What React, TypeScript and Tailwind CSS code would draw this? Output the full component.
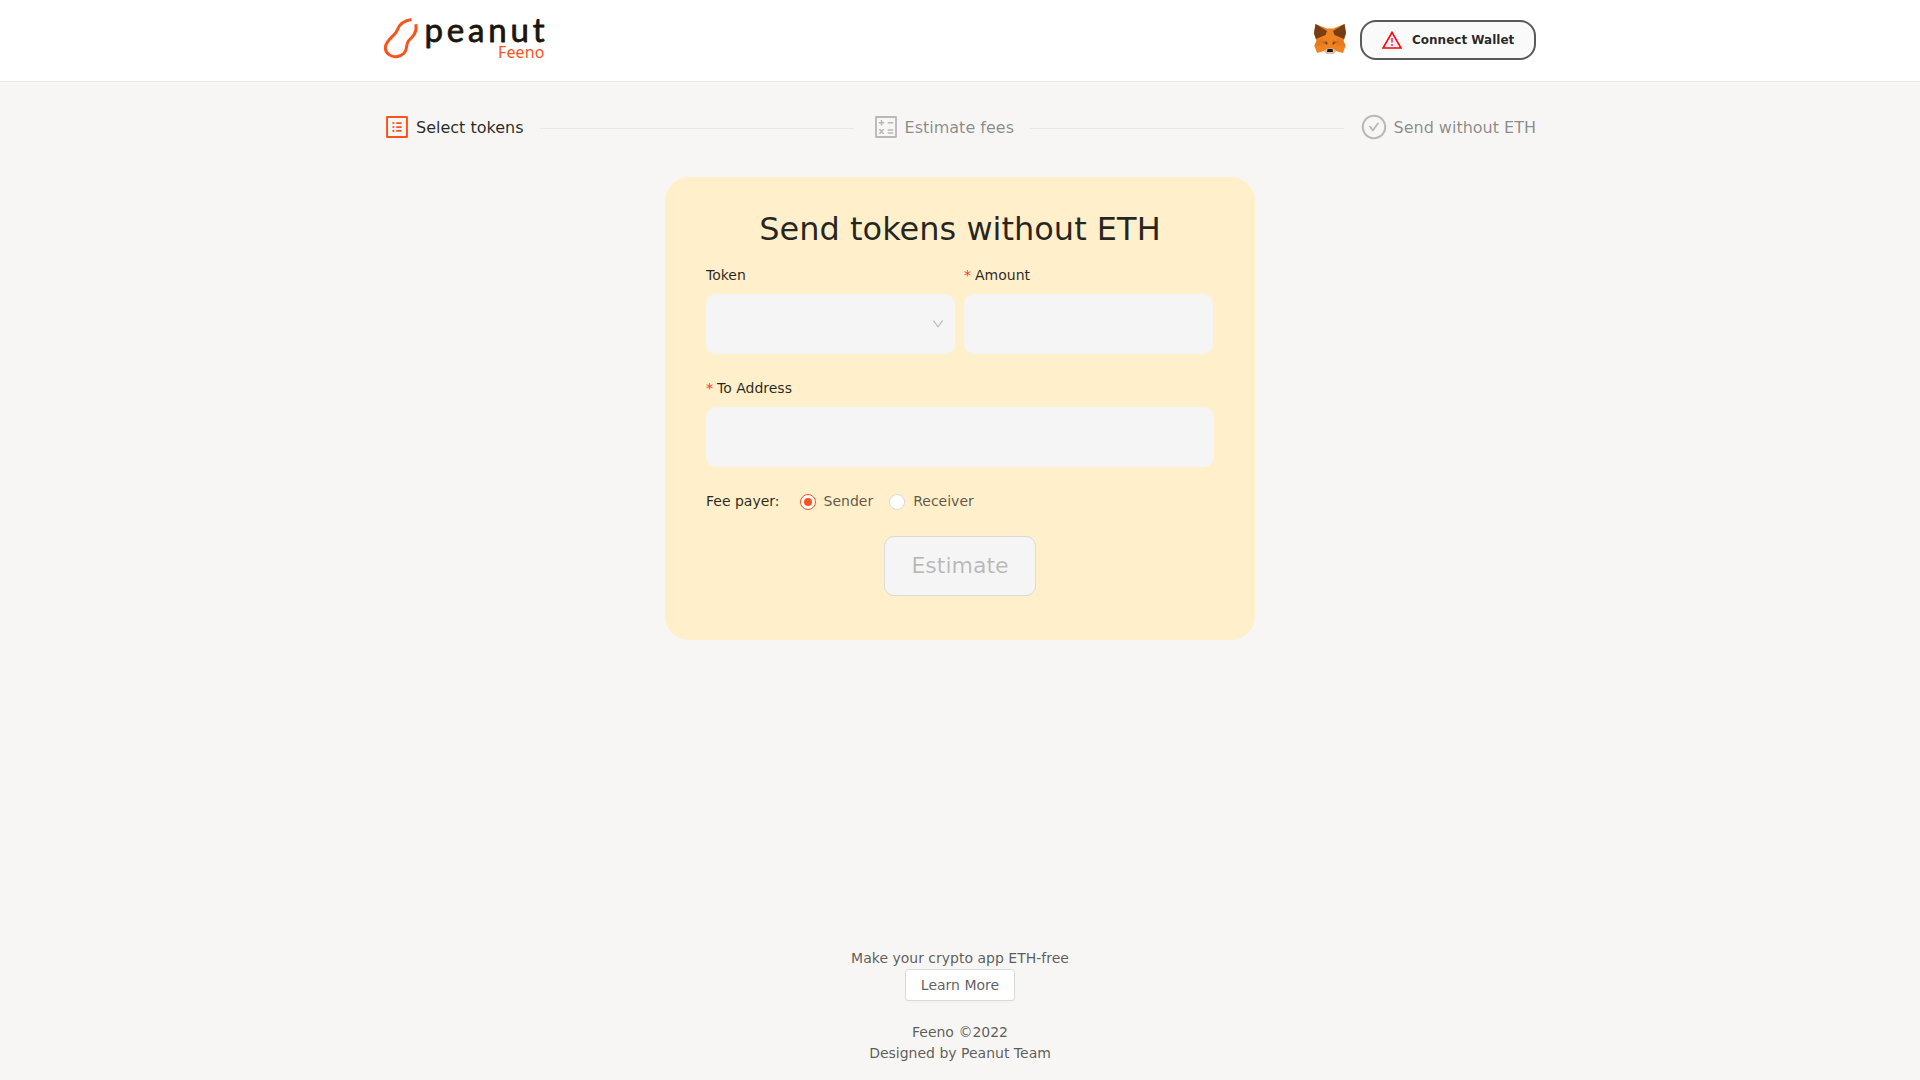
import React from "react";
import {
  AiOutlineProfile,
  AiOutlineCalculator,
  AiOutlineCheckCircle,
  AiOutlineDown,
} from "react-icons/ai";

function Logo() {
  return (
    <svg className="overflow-visible" width="168" height="48" viewBox="380 12 168 48" aria-label="peanut Feeno">
      <path
        d="M411.500 19.400C402 21 398.500 25.500 397.300 30C395.500 35 391 37 387.800 41.500C384 46.500 384.800 51.500 389 54.600C393.500 58 400 57.300 404 53.300C408 49 405.500 45 408.500 40.800C412.500 37 417.500 32.500 415.800 24.200"
        fill="none"
        stroke="#fa541c"
        strokeWidth="3"
      />
      <text
        x="424.500"
        y="41"
        textLength="120"
        lengthAdjust="spacing"
        fill="#1c150c"
        stroke="#1c150c"
        strokeWidth="0.800"
        strokeLinejoin="round"
        fontFamily="Lato"
        fontSize="33"
        transform="translate(0 0.600)"
      >
        peanut
      </text>
      <text x="498" y="58" textLength="46.500" fill="#fa541c" fontFamily="Noto Sans" fontSize="16">
        Feeno
      </text>
    </svg>
  );
}

function Fox() {
  return (
    <svg width="32" height="32" viewBox="0 0 32 32" aria-hidden="true">
      <path d="M1.500 0L13 4.500H19L30.500 0L32 10L29.500 17L31.500 22L29 29L22 27L19 30H13L10 27L3 29L.5 22L2.500 17L0 10Z" fill="#f08320" />
      <path d="M1.500 0L13 7L11.500 11L2 15L0 9Z" fill="#763d16" />
      <path d="M30.500 0L19 7L20.500 11L30 15L32 9Z" fill="#763d16" />
      <path d="M2.500 17L9 14L10 22H.5ZM29.500 17L23 14L22 22H31.500Z" fill="#e87a1d" />
      <path d="M7.500 18L13 16.500L13.500 21ZM24.500 18L19 16.500L18.500 21Z" fill="#c9651e" />
      <path d="M10.500 18.200L13.500 18.700L13 20.800ZM21.500 18.200L18.500 18.700L19 20.800Z" fill="#3a4048" />
      <path d="M10 26.500L13.500 24.500H18.500L22 26.500L19 30H13Z" fill="#d7c1b3" />
      <path d="M13.500 25H18.500L19 28H13Z" fill="#161616" />
    </svg>
  );
}

function Warning() {
  return (
    <svg className="-mt-px" width="20" height="18" viewBox="0 0 20 18" aria-hidden="true">
      <path d="M10 1.300L19 17H1Z" fill="#fff0f6" stroke="#ff0000" strokeWidth="1.600" />
      <path d="M10 7V11.500M10 13V15" stroke="#eb2f96" strokeWidth="1.600" />
    </svg>
  );
}

function Step({ icon, title, active }: { icon: React.ReactNode; title: string; active?: boolean }) {
  return (
    <div className="flex h-8 shrink-0 items-center gap-[5px]">
      <span className={active ? "-mt-0.5 text-[28px] text-[#fa541c]" : "-mt-0.5 text-[28px] text-black/25"}>
        {icon}
      </span>
      <span className={active ? "text-base leading-8 text-black/85" : "text-base leading-8 text-black/45"}>
        {title}
      </span>
    </div>
  );
}

const Line = () => <div className="mt-px h-px flex-1 bg-[#e8e7e5]" />;

function Label({ children, required }: { children: React.ReactNode; required?: boolean }) {
  return (
    <div className="flex h-[22px] items-center text-sm text-black/85">
      {required && <span className="mr-1 text-[#ff2f36]">*</span>}
      {children}
    </div>
  );
}

export default function App() {
  return (
    <div className="flex h-[1080px] flex-col bg-[#f7f6f4] font-['DejaVu_Sans',sans-serif] text-sm text-black/65">
      <header className="h-[82px] border-b border-[#e8e7e5] bg-white">
        <div className="mx-auto flex w-[1152px] justify-between">
          <div className="-ml-1 pt-3">
            <Logo />
          </div>
          <div className="flex items-start gap-3.5 pt-5">
            <div className="pt-1">
              <Fox />
            </div>
            <button className="flex h-10 w-[176px] items-center rounded-2xl border-2 border-[#595959] bg-[#fafafa] pl-5 text-xs font-bold text-black/85">
              <Warning />
              <span className="ml-2.5 whitespace-nowrap">Connect Wallet</span>
            </button>
          </div>
        </div>
      </header>

      <nav className="mx-auto mt-[30px] flex w-[1154px] items-center gap-4 pr-px">
        <Step icon={<AiOutlineProfile />} title="Select tokens" active />
        <Line />
        <div className="pl-[1.5px]">
          <Step icon={<AiOutlineCalculator />} title="Estimate fees" />
        </div>
        <Line />
        <Step icon={<AiOutlineCheckCircle />} title="Send without ETH" />
      </nav>

      <main className="mx-auto mt-[33px] h-[463px] w-[590px] rounded-3xl bg-[#ffefca] px-[41px] pt-8">
        <h1 className="text-center text-[32px] leading-10 text-black/85">Send tokens without ETH</h1>
        <div className="mt-[15px] flex gap-[9px]">
          <div className="w-[249px]">
            <Label>Token</Label>
            <div className="mt-2 flex h-[60px] items-center justify-end rounded-[10px] bg-[#f5f5f5] pr-2.5 text-sm text-black/25">
              <AiOutlineDown />
            </div>
          </div>
          <div className="w-[249px]">
            <Label required>Amount</Label>
            <div className="mt-2 h-[60px] rounded-[10px] bg-[#f5f5f5]" />
          </div>
        </div>
        <div className="mt-[23px]">
          <Label required>To Address</Label>
          <div className="mt-2 h-[60px] rounded-[10px] bg-[#f5f5f5]" />
        </div>
        <div className="mt-[23px] flex items-center">
          <Label>Fee payer:</Label>
          <span className="mt-0.5 ml-5 flex size-4 items-center justify-center rounded-full border border-[#fa541c] bg-white">
            <span className="size-2 rounded-full bg-[#fa541c]" />
          </span>
          <span className="ml-2">Sender</span>
          <span className="mt-0.5 ml-4 size-4 rounded-full border border-[#d9d9d9] bg-white" />
          <span className="ml-2">Receiver</span>
        </div>
        <button className="mx-auto mt-6 flex h-[60px] w-[152px] items-center justify-center rounded-[10px] border border-[#d9d9d9] bg-[#f5f5f5] text-[22px] text-black/25">
          Estimate
        </button>
      </main>

      <footer className="mt-auto flex flex-col items-center pb-4 leading-[22px]">
        <div>Make your crypto app ETH-free</div>
        <button className="flex h-8 w-[110px] items-center justify-center rounded-[3px] border border-[#d9d9d9] bg-white shadow-[0_2px_0_rgba(0,0,0,0.016)]">
          Learn More
        </button>
        <div className="mt-5">Feeno ©2022</div>
        <div className="leading-[21px]">Designed by Peanut Team</div>
      </footer>
    </div>
  );
}
